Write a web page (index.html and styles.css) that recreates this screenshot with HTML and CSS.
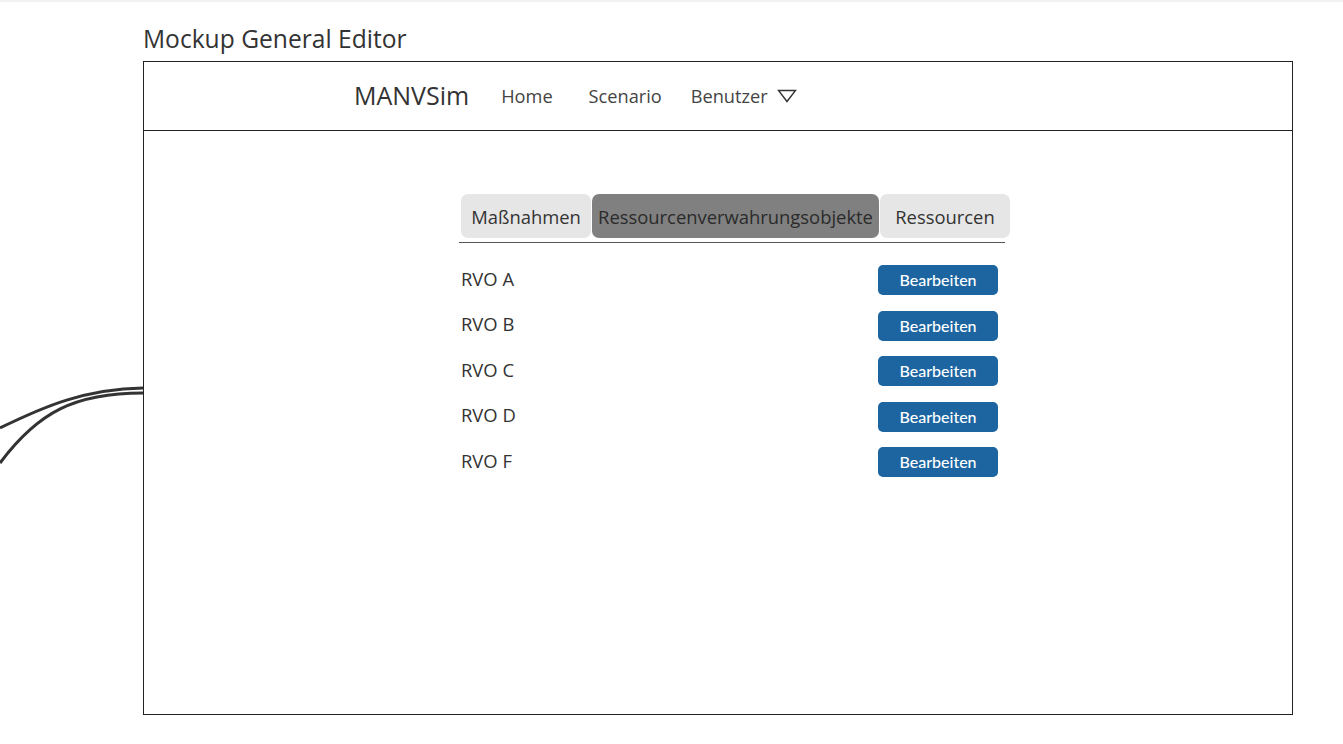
FILE: index.html
```html
<!DOCTYPE html>
<html lang="de">
<head>
<meta charset="utf-8">
<title>Mockup General Editor</title>
<link rel="stylesheet" href="styles.css">
</head>
<body>
<svg class="wires" width="150" height="480" viewBox="0 0 150 480">
  <path d="M0,428 C45,406 85,389 143,388" />
  <path d="M0,463 C38,412 75,393 143,393" />
</svg>
<div class="page">
  <h1 class="title">Mockup General Editor</h1>
  <div class="frame">
    <header class="topbar">
      <span class="brand">MANVSim</span>
      <span class="nav-item nav-home">Home</span>
      <span class="nav-item nav-scenario">Scenario</span>
      <span class="nav-item nav-user">Benutzer
        <svg class="caret" width="20" height="14" viewBox="0 0 20 14"><path d="M1.5,1.5 L18.5,1.5 L10,12.5 Z"/></svg>
      </span>
    </header>
    <main class="content">
      <div class="panel">
        <div class="tabs">
          <div class="tab tab-a">Maßnahmen</div>
          <div class="tab tab-active">Ressourcenverwahrungsobjekte</div>
          <div class="tab tab-c">Ressourcen</div>
        </div>
        <div class="rows">
          <div class="row"><span class="label">RVO A</span><button class="btn">Bearbeiten</button></div>
          <div class="row"><span class="label">RVO B</span><button class="btn">Bearbeiten</button></div>
          <div class="row"><span class="label">RVO C</span><button class="btn">Bearbeiten</button></div>
          <div class="row"><span class="label">RVO D</span><button class="btn">Bearbeiten</button></div>
          <div class="row"><span class="label">RVO F</span><button class="btn">Bearbeiten</button></div>
        </div>
      </div>
    </main>
  </div>
</div>
</body>
</html>
```
FILE: styles.css
```css
html, body {
  margin: 0;
  padding: 0;
  background: #ffffff;
}
body {
  border-top: 2px solid #f2f2f2;
  font-family: "Open Sans", "Liberation Sans", sans-serif;
  color: #333333;
  position: relative;
  min-height: 742px;
}
.wires {
  position: absolute;
  left: 0;
  top: -2px;
}
.wires path {
  fill: none;
  stroke: #333333;
  stroke-width: 3;
}
.page {
  padding-left: 143px;
}
.title {
  margin: 0;
  padding: 20px 0 0 0;
  height: 39px;
  font-size: 24.6px;
  font-weight: 400;
  line-height: 34px;
  color: #333333;
}
.frame {
  width: 1148px;
  height: 652px;
  border: 1px solid #222222;
  display: flex;
  flex-direction: column;
}
.topbar {
  height: 67px;
  padding-bottom: 1px;
  border-bottom: 1px solid #222222;
  display: flex;
  align-items: center;
  padding-left: 210px;
}
.brand {
  font-size: 25px;
  color: #333333;
  padding-bottom: 1px;
}
.nav-item {
  font-size: 18.2px;
  color: #444444;
  display: flex;
  align-items: center;
  gap: 9px;
}
.nav-home { margin-left: 32px; }
.nav-scenario { margin-left: 36px; }
.nav-user { margin-left: 29px; }
.caret path {
  fill: none;
  stroke: #333333;
  stroke-width: 1.4;
}
.content {
  flex: 1;
  padding: 63px 0 0 315px;
}
.panel {
  width: 546px;
}
.tabs {
  display: flex;
  gap: 1px;
  padding: 0 0 4px 2px;
  height: 44px;
  border-bottom: 1px solid #555555;
  width: 544px;
}
.tab {
  height: 44px;
  border-radius: 7px;
  display: flex;
  align-items: center;
  justify-content: center;
  font-size: 18.4px;
  color: #333333;
  background: #e6e6e6;
  flex: none;
  white-space: nowrap;
}
.tab-a { width: 130px; }
.tab-active { width: 287px; background: #808080; color: #2b2b2b; }
.tab-c { width: 130px; }
.rows {
  display: flex;
  flex-direction: column;
  gap: 15.5px;
  padding: 22px 7px 0 2px;
}
.row {
  height: 30px;
  display: flex;
  align-items: center;
  justify-content: space-between;
}
.label {
  font-size: 18.4px;
  color: #333333;
  margin-top: -4px;
}
.btn {
  width: 120px;
  height: 30px;
  border: none;
  border-radius: 5px;
  background: #1d65a1;
  color: #ffffff;
  font-family: "Lato", "Liberation Sans", sans-serif;
  font-size: 16px;
  font-weight: 500;
  padding: 0 0 1px 0;
}
```
